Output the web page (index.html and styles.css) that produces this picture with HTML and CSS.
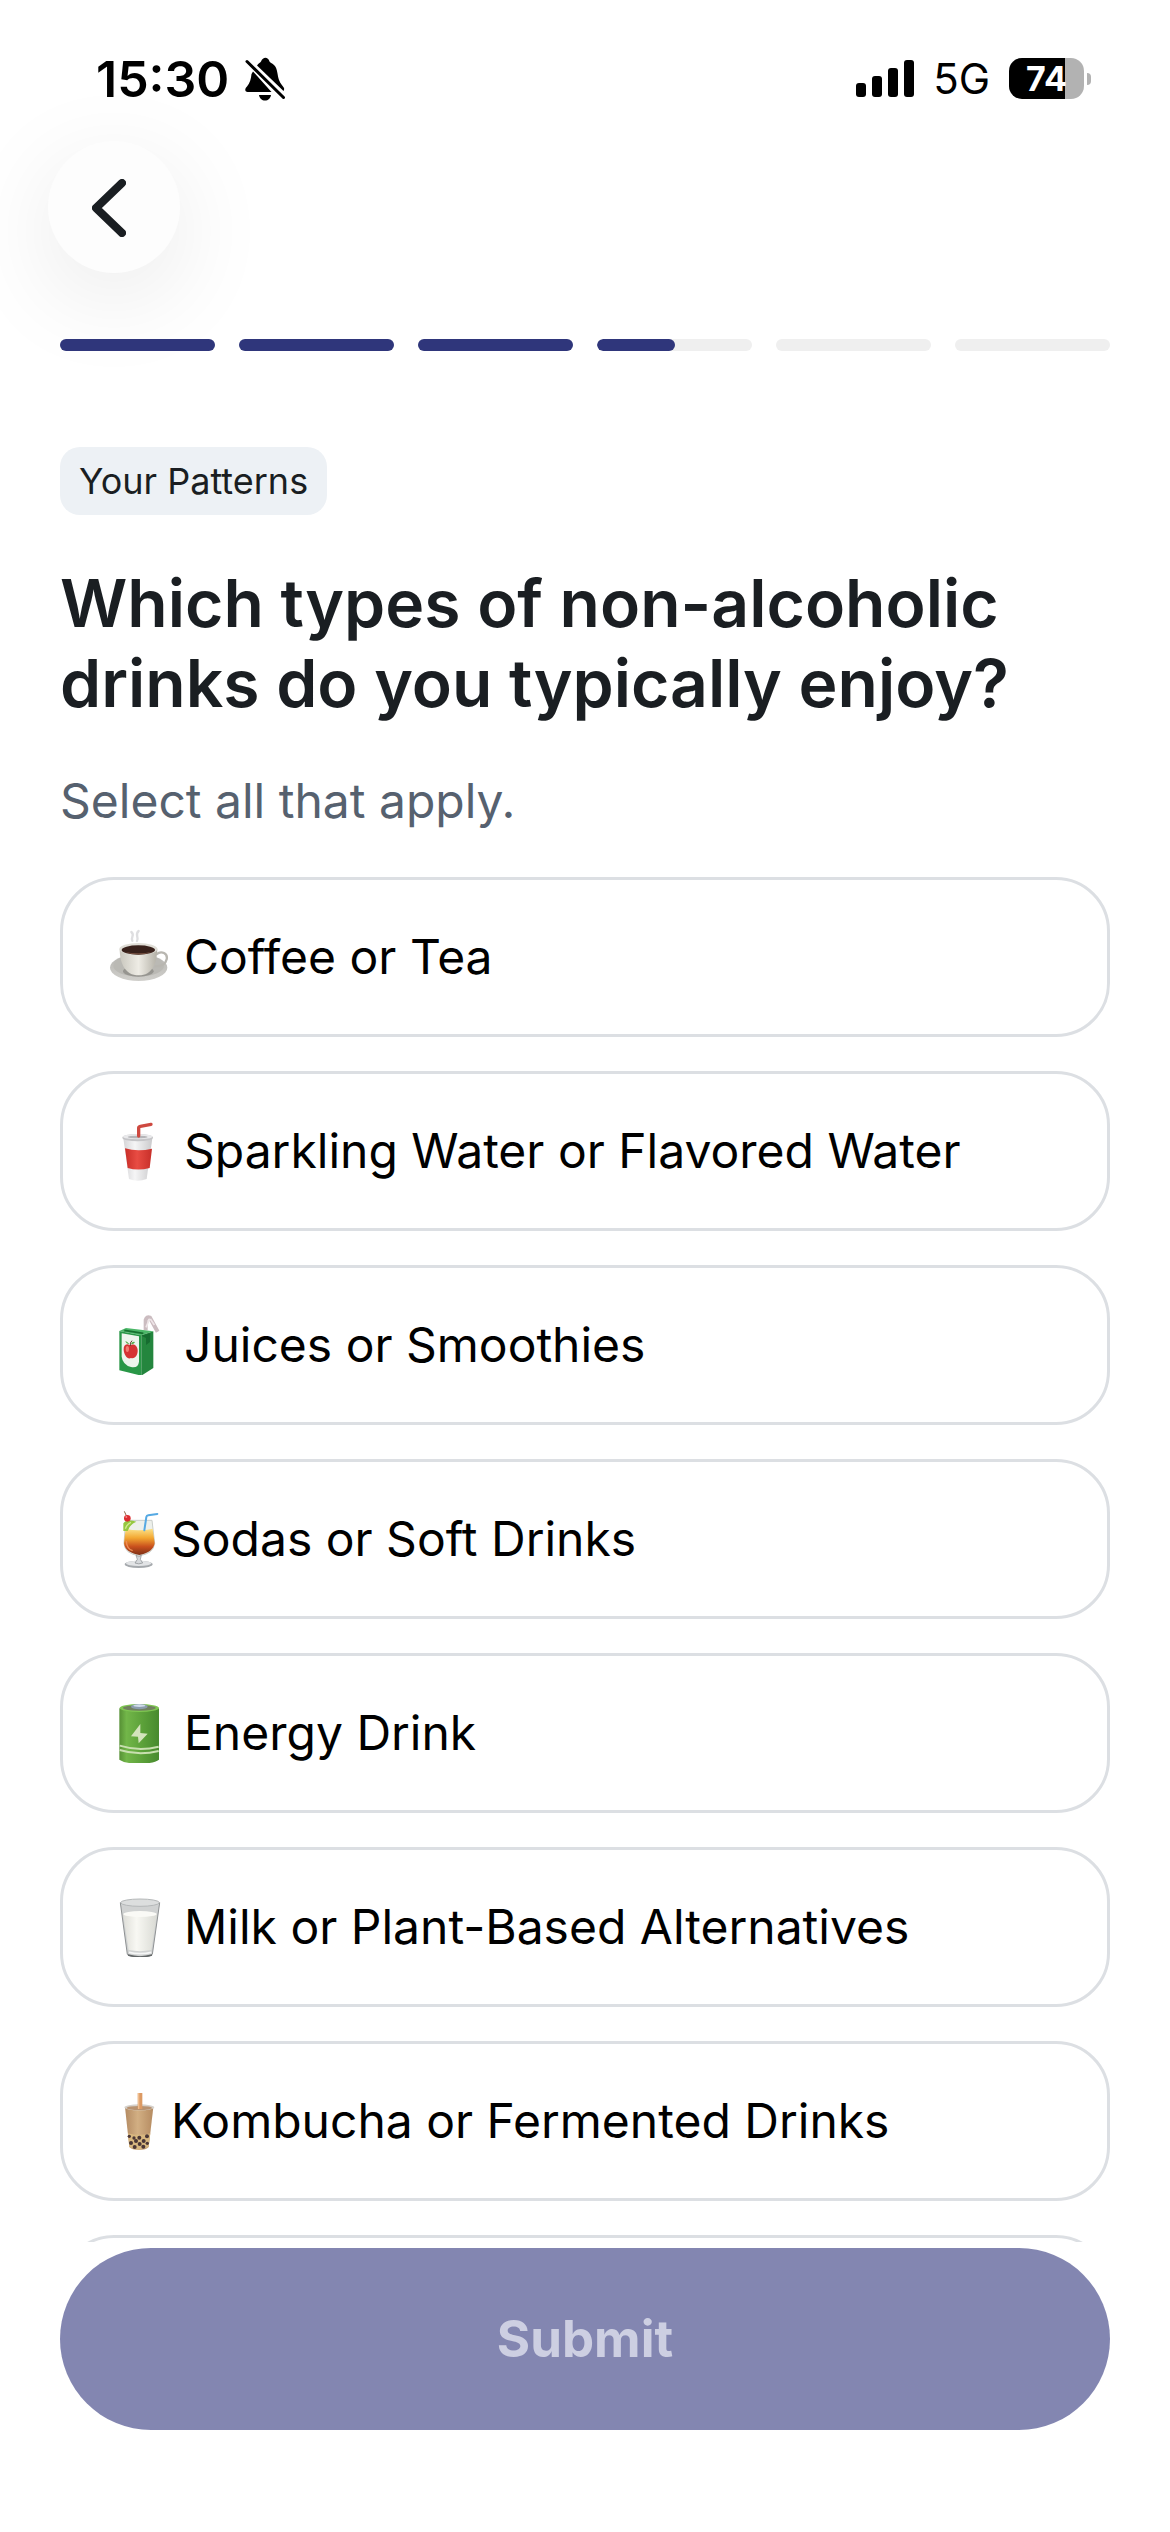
FILE: index.html
```html
<!DOCTYPE html>
<html lang="en">
<head>
<meta charset="utf-8">
<meta name="viewport" content="width=device-width, initial-scale=1">
<title>Your Patterns</title>
<link rel="stylesheet" href="styles.css">
</head>
<body>
<div class="app">
  <div class="status">
    <div class="status-left">
      <span class="time">15:30</span>
      <svg class="bell" width="40" height="44" viewBox="0 0 40 44" aria-hidden="true">
        <path d="M1 34.500C-.5 33 .5 31 2 29.500C5 26 6 22 6.500 17L8 14.500L26.500 35H2.500Z"/>
        <path d="M12 8.500C13.500 6 15.500 5.500 16 4.500C18-.5 23-.5 24.500 4.500C25 5.500 27 6 29 8C33 12 32 18 34 23C35.500 27 38 29 39 31C39.500 33 38.500 34 38.500 34Z"/>
        <path d="M14 38H26C25.500 41.500 23 43.500 20 43.500S14.500 41.500 14 38Z"/>
        <path class="slash" d="M2 4.500L38.500 40.500"/>
      </svg>
    </div>
    <div class="status-right">
      <svg width="58" height="38" viewBox="0 0 58 38" aria-hidden="true">
        <rect y="23" width="10" height="14" rx="3"/><rect x="16" y="16" width="10" height="21" rx="3"/>
        <rect x="32" y="8" width="10" height="29" rx="3"/><rect x="48" width="10" height="37" rx="3"/>
      </svg>
      <span class="network">5G</span>
      <div class="battery"><span class="battery-level">74</span><i class="battery-tip"></i></div>
    </div>
  </div>

  <header class="header">
    <button class="back" type="button" aria-label="Back">
      <svg width="34" height="58" viewBox="0 0 34 58" aria-hidden="true"><path d="M30 4L4 29L30 54"/></svg>
    </button>
    <div class="steps">
      <span class="step done"></span><span class="step done"></span><span class="step done"></span>
      <span class="step half"></span><span class="step"></span><span class="step"></span>
    </div>
  </header>

  <main class="content">
    <span class="tag">Your Patterns</span>
    <h1 class="title" id="question">Which types of non-alcoholic drinks do you typically enjoy?</h1>
    <p class="hint">Select all that apply.</p>

    <ul class="options" aria-labelledby="question">
      <li><label class="option"><input class="check" type="checkbox">
        <svg class="emoji" viewBox="177 201 180 180" aria-hidden="true">
          <defs>
            <linearGradient id="cup" x1="0" x2="1"><stop stop-color="#c9c7be"/><stop offset=".5" stop-color="#eeece5"/><stop offset="1" stop-color="#b3b0a6"/></linearGradient>
            <linearGradient id="saucer" x2="0" y2="1"><stop stop-color="#b5b4b0"/><stop offset="1" stop-color="#d0cfcb"/></linearGradient>
          </defs>
          <path d="M247 242C241 230 256 226 244 216M261 243C268 231 253 224 266 213" fill="none" stroke="#dedee0" stroke-width="7" stroke-linecap="round"/>
          <ellipse cx="266" cy="323" rx="86" ry="40" fill="url(#saucer)"/>
          <ellipse cx="266" cy="318" rx="76" ry="32" fill="#bab9b4"/>
          <ellipse cx="265" cy="334" rx="46" ry="16" fill="#969590"/>
          <path d="M319 283C335 270 354 281 350 298C346 315 330 320 314 319" fill="none" stroke="#b8b6b0" stroke-width="7"/>
          <path d="M209 266C209 307 224 346 266 346S321 307 322 266Z" fill="url(#cup)"/>
          <ellipse cx="265" cy="267" rx="57" ry="18" fill="#dfddd6"/>
          <ellipse cx="265" cy="270" rx="50" ry="14" fill="#38211b"/>
          <path d="M222 275Q265 292 308 275Q265 285 222 275Z" fill="#765040"/>
        </svg>
        <span class="label">Coffee or Tea</span></label></li>
      <li><label class="option"><input class="check" type="checkbox">
        <svg class="emoji" viewBox="57 93 180 180" aria-hidden="true">
          <defs><linearGradient id="paper" x2="1"><stop stop-color="#d5d5d7"/><stop offset=".4" stop-color="#f5f5f6"/><stop offset="1" stop-color="#cacacc"/></linearGradient>
          <linearGradient id="red" x2="1"><stop stop-color="#c92e28"/><stop offset=".45" stop-color="#e84c43"/><stop offset="1" stop-color="#c72f29"/></linearGradient></defs>
          <path d="M100 145L117 267Q143 277 170 267L187 145Z" fill="url(#paper)"/>
          <path d="M105 175Q143 186 186 176L179 234Q144 243 113 234Z" fill="url(#red)"/>
          <ellipse cx="143" cy="143" rx="46" ry="11" fill="#c4c4c7"/>
          <ellipse cx="143" cy="140" rx="44" ry="8" fill="#e9e9eb"/>
          <ellipse cx="143" cy="141" rx="30" ry="4" fill="#b5b5b8"/>
          <path d="M146 138V114Q146 110 151 109L183 103" fill="none" stroke="#ce4940" stroke-width="10" stroke-linecap="round" stroke-linejoin="round"/>
        </svg>
        <span class="label">Sparkling Water or Flavored Water</span></label></li>
      <li><label class="option"><input class="check" type="checkbox">
        <svg class="emoji" viewBox="57 75 180 180" aria-hidden="true">
          <path d="M167 121V90Q170 79 180 83L203 125" fill="none" stroke="#cbbcc0" stroke-width="12" stroke-linejoin="round"/>
          <path d="M168 112L179 86M181 87L193 105" stroke="#eee5e7" stroke-width="5"/>
          <path d="M88 123L108 114L190 124L154 136Z" fill="#4bb768"/>
          <path d="M88 123L154 136V257L88 241Z" fill="#299747"/>
          <path d="M154 136L190 124V234L154 257Z" fill="#24863e"/>
          <path d="M95 130L147 139V215Q145 235 123 231Q98 224 95 200Z" fill="#edf5ed"/>
          <path d="M120 166C109 159 100 165 101 180C102 195 113 210 123 204C135 208 144 194 143 180C142 166 130 160 120 166Z" fill="#d53334"/>
          <ellipse cx="112" cy="177" rx="5" ry="9" fill="#f27a70"/>
          <path d="M121 168Q119 158 126 152" fill="none" stroke="#65422d" stroke-width="3"/>
          <path d="M123 162Q127 153 135 156Q132 164 123 162M118 162Q112 154 106 153Q109 163 118 162Z" fill="#57aa49"/>
          <path d="M154 137L181 129L180 156L168 165V144Z" fill="#166c30"/>
          <path d="M103 121L160 130" stroke="#16702f" stroke-width="5"/>
        </svg>
        <span class="label">Juices or Smoothies</span></label></li>
      <li><label class="option tight"><input class="check" type="checkbox">
        <svg class="emoji" viewBox="57 87 180 180" aria-hidden="true">
          <defs><linearGradient id="sunset" x2="0" y2="1"><stop stop-color="#fbe28a"/><stop offset=".35" stop-color="#f3a832"/><stop offset=".68" stop-color="#c9501d"/><stop offset="1" stop-color="#7d3016"/></linearGradient></defs>
          <path d="M107 121H186L194 190Q190 222 148 227Q104 222 102 190Z" fill="#edf0eb" stroke="#c9ceca" stroke-width="3"/>
          <path d="M107 146Q145 155 188 146L194 190Q190 217 148 225Q104 217 102 190Z" fill="url(#sunset)"/>
          <path d="M109 183Q110 207 128 212" fill="none" stroke="#ef8c54" stroke-width="4"/>
          <ellipse cx="146" cy="253" rx="42" ry="11" fill="#a5a9ad"/>
          <ellipse cx="146" cy="250" rx="38" ry="8" fill="#e2e4e6"/>
          <path d="M138 226Q146 234 154 226L151 238L158 249Q146 254 135 249L142 238Z" fill="#d6d9dc" stroke="#85898c" stroke-width="2"/>
          <path d="M100 153V130Q111 116 139 125Q121 131 113 153Z" fill="#95c83f"/>
          <path d="M106 146Q111 132 123 127" fill="none" stroke="#d4e990" stroke-width="4"/>
          <path d="M109 107L103 94" stroke="#8e6140" stroke-width="3"/>
          <circle cx="112" cy="115" r="10" fill="#dc2d31"/><circle cx="109" cy="111" r="3" fill="#f48782"/>
          <path d="M163 151L169 111Q170 107 175 106L202 102" fill="none" stroke="#55a9e3" stroke-width="6" stroke-linecap="round"/>
        </svg>
        <span class="label">Sodas or Soft Drinks</span></label></li>
      <li><label class="option"><input class="check" type="checkbox">
        <svg class="emoji" viewBox="57 99 180 180" aria-hidden="true">
          <defs><linearGradient id="cell" x2="1"><stop stop-color="#569035"/><stop offset=".18" stop-color="#72b649"/><stop offset=".6" stop-color="#5ba039"/><stop offset="1" stop-color="#478a2e"/></linearGradient></defs>
          <path d="M88 115V269Q105 281 148 281T207 269V115Z" fill="url(#cell)"/>
          <ellipse cx="148" cy="114" rx="59" ry="12" fill="#7fc652"/>
          <ellipse cx="148" cy="114" rx="49" ry="8" fill="#71815f"/>
          <ellipse cx="148" cy="110" rx="25" ry="8" fill="#8b9cad"/>
          <ellipse cx="148" cy="107" rx="18" ry="4" fill="#d0dcea"/>
          <path d="M151 162L123 199L144 200L146 220L173 191L151 189Z" fill="#d4e4bd"/>
          <path d="M89 227Q146 245 206 230M89 240Q146 258 206 243" fill="none" stroke="#c8dfaf" stroke-width="6"/>
        </svg>
        <span class="label">Energy Drink</span></label></li>
      <li><label class="option"><input class="check" type="checkbox">
        <svg class="emoji" viewBox="57 81 180 180" aria-hidden="true">
          <defs><linearGradient id="milk" x2="1"><stop stop-color="#deded8"/><stop offset=".4" stop-color="#f8f8f3"/><stop offset="1" stop-color="#d9dad4"/></linearGradient></defs>
          <path d="M91 98L112 253Q120 261 150 261T187 253L209 98Z" fill="#d0d2d2" stroke="#8e9192" stroke-width="3"/>
          <path d="M99 131Q150 143 201 131L184 240Q150 247 116 240Z" fill="url(#milk)"/>
          <ellipse cx="150" cy="132" rx="50" ry="9" fill="#fafaf6"/>
          <ellipse cx="150" cy="98" rx="58" ry="11" fill="#dcdede" stroke="#b5b8b9" stroke-width="3"/>
          <path d="M117 247Q150 255 184 247" fill="none" stroke="#f5f6f6" stroke-width="5"/>
          <path d="M114 255Q150 266 186 255" fill="none" stroke="#626667" stroke-width="4"/>
        </svg>
        <span class="label">Milk or Plant-Based Alternatives</span></label></li>
      <li><label class="option tight"><input class="check" type="checkbox">
        <svg class="emoji" viewBox="57 93 180 180" aria-hidden="true">
          <defs><linearGradient id="tea" x2="1"><stop stop-color="#b48b63"/><stop offset=".45" stop-color="#d2af83"/><stop offset="1" stop-color="#b58b61"/></linearGradient></defs>
          <path d="M105 142L118 261Q125 270 147 270T176 261L190 142Z" fill="url(#tea)"/>
          <path d="M114 220Q147 229 181 220L176 261Q147 274 118 261Z" fill="#d8b77f"/>
          <ellipse cx="148" cy="142" rx="45" ry="9" fill="#d5d1cc"/>
          <ellipse cx="148" cy="144" rx="38" ry="6" fill="#b89270"/>
          <path d="M143 99H157V147H143Z" fill="#dc9a63"/><path d="M146 99V147" stroke="#f0bd8e" stroke-width="4"/>
          <g fill="#4b3736"><circle cx="118" cy="229" r="5"/><circle cx="132" cy="234" r="5"/><circle cx="148" cy="233" r="6"/><circle cx="161" cy="243" r="6"/><circle cx="171" cy="229" r="6"/><circle cx="138" cy="243" r="6"/><circle cx="123" cy="249" r="6"/><circle cx="149" cy="252" r="6"/><circle cx="172" cy="250" r="5"/><circle cx="134" cy="261" r="6"/><circle cx="160" cy="260" r="6"/></g>
        </svg>
        <span class="label">Kombucha or Fermented Drinks</span></label></li>
      <li class="option"></li>
    </ul>
  </main>

  <footer class="footer">
    <button class="submit" type="submit" disabled>Submit</button>
  </footer>
</div>
</body>
</html>
```
FILE: styles.css
```css
* { box-sizing: border-box; }

body {
  margin: 0;
  background: #fff;
  color: #1a1e22;
  font-family: Inter, "Liberation Sans", sans-serif;
  font-optical-sizing: none;
}

.app {
  display: flex;
  flex-direction: column;
  height: 100vh;
}

/* Status bar */
.status {
  display: flex;
  justify-content: space-between;
  align-items: center;
  height: 141px;
  padding: 16px 79px 0 96px;
  color: #000;
}
.status-left, .status-right { display: flex; align-items: center; }
.status-left { gap: 16px; }
.status-right { gap: 19px; }
.time { font-size: 50px; font-weight: 600; line-height: 60px; }
.bell .slash { fill: none; stroke: #000; stroke-width: 3; stroke-linecap: round; }
.network { font-size: 42px; line-height: 50px; }
.battery { display: flex; align-items: center; gap: 3px; }
.battery-level {
  width: 75px;
  border-radius: 13px;
  background: linear-gradient(to right, #000 75%, #b2b2b2 75%);
  color: #fff;
  font-size: 34px;
  font-weight: 700;
  line-height: 41px;
  text-align: center;
}
.battery-tip {
  width: 4px;
  height: 12px;
  border-radius: 0 4px 4px 0;
  background: #b2b2b2;
}

/* Back button and progress */
.header { padding: 0 60px; }
.back {
  display: flex;
  align-items: center;
  justify-content: center;
  width: 132px;
  height: 132px;
  margin: 0 0 66px -12px;
  padding: 2px 10px 0 0;
  border: 0;
  border-radius: 50%;
  background: #fdfdfd;
  box-shadow: 0 24px 100px rgba(0, 0, 0, .09);
}
.back path {
  fill: none;
  stroke: #1a1e22;
  stroke-width: 8;
  stroke-linecap: round;
  stroke-linejoin: round;
}
.steps { position: relative; display: flex; gap: 24px; }
.step { flex: 1; height: 12px; border-radius: 6px; background: #efefef; overflow: hidden; }
.done { background: #2f367b; }
.half::before {
  content: "";
  display: block;
  width: 50%;
  height: 100%;
  border-radius: 6px;
  background: #2f367b;
}

/* Question */
.content {
  flex: 1;
  min-height: 0;
  overflow-y: auto;
  scrollbar-width: none;
  padding: 96px 60px 0;
}
.tag {
  display: inline-block;
  padding: 12px 19px;
  border-radius: 20px;
  background: #edf1f5;
  font-size: 36px;
  line-height: 44px;
}
.title {
  margin: 48px 0 42px;
  font-size: 66px;
  font-weight: 600;
  line-height: 80px;
}
.hint {
  margin: 0;
  color: #56616f;
  font-size: 48px;
  line-height: 72px;
}

/* Answers */
.options {
  display: flex;
  flex-direction: column;
  gap: 34px;
  margin: 40px 0 0;
  padding: 0 0 34px;
  list-style: none;
}
.option {
  display: flex;
  align-items: center;
  gap: 15px;
  min-height: 160px;
  padding: 0 46px;
  border: 3px solid #dcdfe3;
  border-radius: 54px;
  color: #000;
  font-size: 48px;
  line-height: 60px;
}
.tight { gap: 2px; }
.check {
  position: absolute;
  opacity: 0;
  pointer-events: none;
}
.emoji { flex: none; width: 60px; height: 60px; }

/* Submit */
.footer { padding: 6px 60px 102px; background: #fff; }
.submit {
  display: block;
  width: 100%;
  padding: 61px 0;
  border: 0;
  border-radius: 91px;
  background: #8386b1;
  color: #cdcfe2;
  font: 700 51px/60px Inter, "Liberation Sans", sans-serif;
}
```
